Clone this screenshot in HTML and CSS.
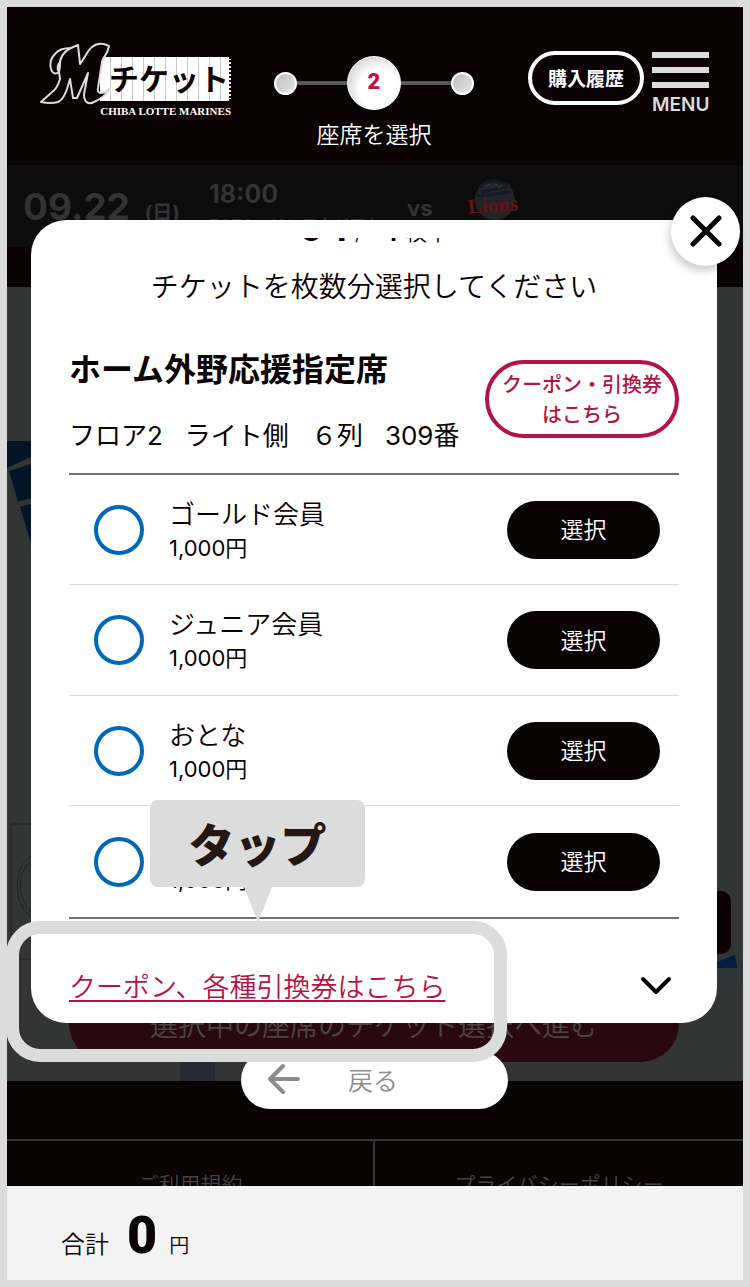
FILE: index.html
```html
<!DOCTYPE html>
<html lang="ja">
<head>
<meta charset="utf-8">
<meta name="viewport" content="width=device-width, initial-scale=1">
<title>Mチケット 座席を選択</title>
<link rel="stylesheet" href="styles.css">
</head>
<body>
<div class="screen">
  <header class="header">
    <a class="logo" href="#" aria-label="Mチケット CHIBA LOTTE MARINES">
      <svg class="logo-m" viewBox="0 0 72 64" aria-hidden="true">
        <path d="M69 4C63 1 57 1 52 5C47 9 45 16 40 22L38 3L31 6C23 6 18 8 15 12C10 17 10 23 11 27C12 31 15 33 19 30L20 37C18 44 16 48 11 51L1 60Q11 62 18 60C23 58 25 53 27 47L30 37L33 56L37 56L48 31L44 52C44 60 48 63 54 60C61 57 66 53 70 47L65 50C60 52 57 51 58 46L62 20C63 14 67 15 69 4Z"/>
        <path class="m-thin" d="M31 6C23 10 19 17 20 24L19 30C17 28 17 23 20 20"/>
      </svg>
      <span class="logo-ticket">チケット</span>
      <span class="logo-team">CHIBA LOTTE MARINES</span>
    </a>
    <div class="steps">
      <div class="step-track">
        <span class="dot"></span><span class="track-line"></span><span class="step-now">2</span><span class="track-line"></span><span class="dot"></span>
      </div>
      <p class="step-label">座席を選択</p>
    </div>
    <div class="actions">
      <button class="history" type="button">購入履歴</button>
      <button class="menu" type="button"><span class="bar"></span><span class="bar"></span><span class="bar"></span><span class="menu-text">MENU</span></button>
    </div>
  </header>

  <section class="event">
    <p class="date">09.22 <small>(日)</small></p>
    <div class="place"><p class="time">18:00</p><p class="stadium">ZOZOマリンスタジアム</p></div>
    <p class="vs">vs</p>
    <svg class="lions" viewBox="0 0 54 44" aria-hidden="true">
      <circle cx="28" cy="22" r="20" fill="#222426"/>
      <path d="M12 10q8-9 17-7l14 5M14 14l26-5M10 18l34-4" stroke="#141b25" stroke-width="3" fill="none"/>
      <path d="M18 9l4-3 3 4 4-4 3 4 4-3" stroke="#3a3d40" fill="none"/>
      <text x="1" y="34" class="lions-text" transform="rotate(-4 27 30)">Lions</text>
    </svg>
  </section>

  <main class="map">
    <svg class="map-left" viewBox="0 0 24 650" aria-hidden="true">
      <path d="M0 154H24V170L0 181ZM2 184L24 177V211L11 215ZM13 220L24 217V256Z" fill="#031427"/>
      <path d="M0 187L24 258V276Z" fill="#2f3535"/>
      <path d="M24 537H4V672M4 672H24M24 569C6 580 6 617 24 630M24 574C10 584 10 612 24 625" fill="none" stroke="#232524"/>
    </svg>
    <svg class="map-right" viewBox="0 0 26 160" aria-hidden="true">
      <path d="M0 0L10 48H0ZM0 100L22 105L26 135L0 145Z" fill="#2d3538"/>
      <path d="M0 115L18 108L20 121H0Z" fill="#031f3f"/>
      <rect x="-20" y="44" width="34" height="63" rx="10" fill="#0a0203"/>
    </svg>
    <span class="map-block"></span>
    <button class="proceed" type="button">選択中の座席のチケット選択へ進む</button>
    <a class="back" href="#"><svg viewBox="0 0 34 32" aria-hidden="true"><path d="M17 3L4 16L17 29M4 16H32"/></svg><span>戻る</span></a>
  </main>

  <footer class="footer">
    <nav class="footer-links"><a href="#">ご利用規約</a><a href="#">プライバシーポリシー</a></nav>
  </footer>

  <section class="total"><span class="total-label">合計</span><strong class="amount">0</strong><span class="yen">円</span></section>

  <section class="modal" role="dialog" aria-label="チケット選択">
    <p class="count"><b>0</b><b>1</b><span>/</span><b class="small">1</b><span>枚中</span></p>
    <p class="lead">チケットを枚数分選択してください</p>
    <div class="seat">
      <div class="seat-info">
        <h1>ホーム外野応援指定席</h1>
        <p class="seat-detail"><span>フロア2</span><span>ライト側</span><span>６列</span><span>309番</span></p>
      </div>
      <button class="coupon" type="button">クーポン・引換券<br>はこちら</button>
    </div>
    <ul class="types">
      <li><input type="radio" name="type" id="t1"><label for="t1">ゴールド会員<span>1,000円</span></label><button type="button">選択</button></li>
      <li><input type="radio" name="type" id="t2"><label for="t2">ジュニア会員<span>1,000円</span></label><button type="button">選択</button></li>
      <li><input type="radio" name="type" id="t3"><label for="t3">おとな<span>1,000円</span></label><button type="button">選択</button></li>
      <li><input type="radio" name="type" id="t4"><label for="t4">こども<span>1,000円</span></label><button type="button">選択</button></li>
    </ul>
    <div class="more">
      <a href="#">クーポン、各種引換券はこちら</a>
      <svg viewBox="0 0 32 20" aria-hidden="true"><path d="M3 3L16 16L29 3"/></svg>
    </div>
  </section>
  <button class="close" type="button" aria-label="閉じる"><svg viewBox="0 0 32 32" aria-hidden="true"><path d="M3 3L29 29M29 3L3 29"/></svg></button>

  <div class="highlight"></div>
  <div class="tip">タップ<svg viewBox="0 0 28 38" aria-hidden="true"><path d="M0 0H28L17 28Q14 34 14 38Q14 34 11 28Z"/></svg></div>
</div>
</body>
</html>
```

FILE: styles.css
```css
* { box-sizing: border-box; }
body {
  margin: 0;
  color: #0a0203;
  font-family: "Noto Sans CJK JP", sans-serif;
  font-weight: 350;
}
p, h1, ul { margin: 0; padding: 0; }
button { margin: 0; padding: 0; font: inherit; cursor: pointer; }
a { color: inherit; text-decoration: none; }

.screen {
  position: relative;
  display: flex;
  flex-direction: column;
  min-height: 100vh;
  border: 7px solid #dcdcdc;
  background: #0a0203;
}

/* header */
.header {
  display: flex;
  align-items: flex-start;
  height: 158px;
  padding: 35px 34px 0 33px;
}
.logo {
  display: grid;
  grid-template-columns: 60px 131px;
  grid-template-rows: 15px 44px 20px;
  width: 191px;
}
.logo-m {
  grid-area: 1 / 1 / 3 / 3;
  width: 72px;
  height: 64px;
  z-index: 1;
}
.logo-m path { fill: #0a0203; stroke: #dcdcdc; stroke-width: 2; stroke-linejoin: round; }
.logo-m .m-thin { fill: none; }
.logo-ticket {
  grid-area: 2 / 2;
  border-right: 2px dotted #0a0203;
  background: repeating-linear-gradient(90deg, #fff 0 10px, #c8c8c8 10px 11px);
  font-size: 30px;
  font-weight: 700;
  line-height: 40px;
  text-align: right;
  white-space: nowrap;
}
.logo-team {
  grid-area: 3 / 1 / 4 / 3;
  color: #fff;
  font: bold 11px/20px "Liberation Serif", serif;
  text-align: right;
  white-space: nowrap;
}
.steps { width: 200px; margin-left: 43px; padding-top: 14px; }
.step-track { display: flex; align-items: center; }
.dot {
  width: 23px;
  height: 23px;
  border: 2px solid #fff;
  border-radius: 50%;
  background: linear-gradient(135deg, #bdbdbd, #e6e6e6);
}
.track-line { flex: 1; height: 4px; background: #595959; }
.step-now {
  width: 54px;
  height: 54px;
  border: 1px solid #fff;
  border-radius: 50%;
  background: radial-gradient(circle at 60% 60%, #fff 45%, #b5b5b5);
  color: #c30d4b;
  font: 900 22px/50px "Roboto", sans-serif;
  text-align: center;
}
.step-label {
  color: #fff;
  font-size: 23px;
  line-height: 30px;
  margin-top: 8px;
  text-align: center;
}
.actions { display: flex; gap: 8px; margin-left: auto; padding-top: 9px; }
.history {
  width: 116px;
  height: 54px;
  padding-bottom: 2px;
  border: 4px solid #fff;
  border-radius: 27px;
  background: transparent;
  color: #fff;
  font-size: 19px;
  font-weight: 700;
  white-space: nowrap;
}
.menu {
  display: flex;
  flex-direction: column;
  gap: 9px;
  width: 57px;
  padding-top: 1px;
  border: 0;
  background: transparent;
}
.bar { width: 100%; height: 6px; background: #dcdcdc; }
.menu-text { color: #dcdcdc; font: 600 19px/16px "Inter", sans-serif; }

/* dimmed game summary */
.event {
  display: flex;
  height: 82px;
  padding: 0 16px;
  background: #0c0c0c;
  color: #333;
  font-family: "Inter", "Noto Sans CJK JP", sans-serif;
  font-weight: 700;
}
.date { width: 186px; padding-top: 18px; font-size: 37px; line-height: 48px; white-space: nowrap; }
.date small { margin-left: 6px; font-size: 20px; }
.place { width: 198px; }
.time { padding-top: 16px; font-size: 25px; line-height: 26px; }
.stadium { padding-top: 6px; font-size: 16px; line-height: 24px; white-space: nowrap; }
.vs { width: 60px; padding-top: 30px; font-size: 22px; line-height: 26px; }
.lions { width: 54px; height: 44px; margin-top: 13px; }
.lions-text { fill: #651318; font: bold 21px "Liberation Serif", serif; }

/* dimmed seat map */
.map {
  position: relative;
  display: flex;
  flex: 1;
  flex-direction: column;
  justify-content: flex-end;
  margin-top: 40px;
  padding: 0 64px 19px 62px;
  background: #333534;
}
.map-left { position: absolute; top: 0; left: 0; width: 24px; height: 650px; overflow: visible; }
.map-right { position: absolute; right: 0; bottom: 74px; width: 26px; height: 160px; }
.map-block { position: absolute; bottom: 0; left: 173px; width: 35px; height: 24px; background: #252a32; }
.proceed {
  height: 76px;
  border: 0;
  border-radius: 38px;
  background: #29090f;
  color: #4b4546;
  font-size: 28px;
  white-space: nowrap;
}
.back {
  position: absolute;
  bottom: -28px;
  left: 234px;
  display: flex;
  align-items: center;
  gap: 48px;
  width: 267px;
  height: 58px;
  padding: 0 0 2px 25px;
  border-radius: 29px;
  background: #fff;
  color: #8c8c8c;
  font-size: 25px;
}
.back svg { width: 34px; height: 32px; }
.back path, .close path, .more path {
  fill: none;
  stroke: #8c8c8c;
  stroke-width: 4;
  stroke-linecap: round;
  stroke-linejoin: round;
}

/* page end */
.footer { height: 105px; padding-top: 58px; }
.footer-links {
  display: grid;
  grid-template-columns: 1fr 1fr;
  height: 47px;
  overflow: hidden;
  border-top: 2px solid #333534;
  color: #444;
  font-size: 21px;
  line-height: 28px;
  text-align: center;
}
.footer-links a { padding-top: 28px; }
.footer-links a:first-child { border-right: 2px solid #333534; }
.total {
  display: flex;
  align-items: baseline;
  height: 94px;
  padding: 20px 54px 0;
  background: #f3f3f3;
  line-height: 60px;
}
.total-label { font-size: 24px; }
.amount {
  margin: 0 12px 0 18px;
  font-family: "Roboto", sans-serif;
  font-size: 52px;
  font-weight: 900;
}
.yen { font-size: 20px; }

/* ticket dialog */
.modal {
  position: absolute;
  top: 213px;
  right: 26px;
  left: 24px;
  padding: 18px 38px 17px;
  border-radius: 35px;
  background: #fff;
}
.count {
  display: flex;
  align-items: flex-end;
  justify-content: center;
  gap: 8px;
  height: 8px;
  overflow: hidden;
  font-family: "Inter", "Noto Sans CJK JP", sans-serif;
  font-size: 22px;
  line-height: 28px;
}
.count b { font-size: 36px; line-height: 36px; }
.count .small { margin-left: 16px; font-size: 24px; line-height: 26px; }
.lead { margin-top: 19px; font-size: 28px; line-height: 40px; text-align: center; }
.seat {
  display: flex;
  align-items: flex-start;
  justify-content: space-between;
  margin-top: 42px;
  padding-bottom: 17px;
  border-bottom: 2px solid #727171;
}
.seat h1 { font-size: 32px; line-height: 40px; white-space: nowrap; }
.seat-detail {
  display: flex;
  gap: 22px;
  margin-top: 29px;
  font-family: "Inter", "Noto Sans CJK JP", sans-serif;
  font-size: 26px;
  font-weight: 400;
  line-height: 40px;
  white-space: nowrap;
}
.coupon {
  flex: none;
  width: 194px;
  height: 78px;
  margin-top: 13px;
  border: 4px solid #b01545;
  border-radius: 39px;
  background: #fff;
  color: #b01545;
  font-size: 20px;
  font-weight: 500;
  line-height: 30px;
  white-space: nowrap;
}
.types { list-style: none; border-bottom: 2px solid #727171; }
.types li {
  display: flex;
  align-items: center;
  height: 110px;
  padding: 0 19px 0 25px;
  border-bottom: 1px solid #dcdcdc;
}
.types li:nth-child(even) { height: 111px; }
.types li:last-child { border-bottom: 0; }
.types input {
  width: 50px;
  height: 50px;
  margin: 0;
  appearance: none;
  border: 4px solid #0068b7;
  border-radius: 50%;
}
.types label { flex: 1; margin-left: 25px; font-size: 26px; line-height: 36px; }
.types label span {
  display: block;
  font-family: "Inter", "Noto Sans CJK JP", sans-serif;
  font-size: 22px;
  font-weight: 400;
  line-height: 34px;
}
.types button {
  width: 153px;
  height: 58px;
  padding-bottom: 3px;
  border: 0;
  border-radius: 29px;
  background: #0a0203;
  color: #fff;
  font-size: 23px;
}
.more {
  display: flex;
  align-items: center;
  justify-content: space-between;
  padding: 47px 7px 0 0;
  line-height: 40px;
}
.more a {
  color: #b01545;
  font-size: 27px;
  text-decoration: underline;
  text-decoration-thickness: 2px;
  text-underline-offset: 3px;
}
.more svg { width: 32px; height: 20px; }
.more path, .close path { stroke: #000; }
.close {
  position: absolute;
  top: 190px;
  right: 3px;
  display: grid;
  place-items: center;
  width: 69px;
  height: 69px;
  padding-bottom: 2px;
  border: 0;
  border-radius: 50%;
  background: #fff;
  box-shadow: -2px 5px 8px #0003;
}
.close svg { width: 32px; height: 32px; }
.close path { stroke-width: 5; }

/* tutorial callout */
.highlight {
  position: absolute;
  top: 914px;
  left: -1px;
  width: 501px;
  height: 141px;
  border: 13px solid #dcdcdc;
  border-radius: 34px;
}
.tip {
  position: absolute;
  top: 793px;
  left: 143px;
  width: 215px;
  height: 87px;
  border-radius: 8px;
  background: #dcdcdc;
  color: #231815;
  font-size: 46px;
  font-weight: 900;
  line-height: 84px;
  text-align: center;
}
.tip svg { position: absolute; top: 87px; left: 94px; width: 28px; height: 38px; fill: #dcdcdc; }
```
